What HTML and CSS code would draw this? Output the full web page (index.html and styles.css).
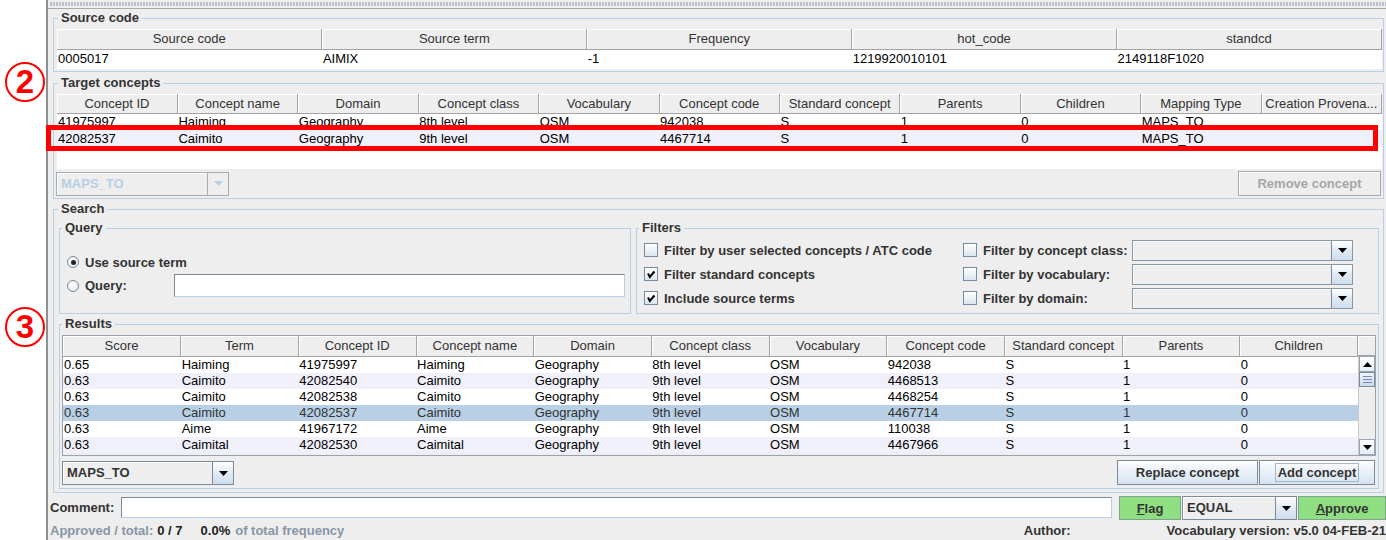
FILE: index.html
```html
<!DOCTYPE html>
<html>
<head>
<meta charset="utf-8">
<title>Mapping</title>
<link rel="stylesheet" href="styles.css">
</head>
<body>
<div class="screen">
  <div class="gutter"></div>
  <div class="vbar"></div>
  <div class="app">
    <div class="hdivider"><div class="dots"></div></div>

    <fieldset class="tb top source">
      <legend>Source code</legend>
      <div class="pane src-pane">
        <table class="grid r20">
          <thead><tr><th>Source code</th><th>Source term</th><th>Frequency</th><th>hot_code</th><th>standcd</th></tr></thead>
          <tbody><tr><td>0005017</td><td>AIMIX</td><td>-1</td><td>1219920010101</td><td>2149118F1020</td></tr></tbody>
        </table>
      </div>
    </fieldset>

    <fieldset class="tb top target">
      <legend>Target concepts</legend>
      <div class="pane tgt-pane">
        <table class="grid r17">
          <thead><tr><th>Concept ID</th><th>Concept name</th><th>Domain</th><th>Concept class</th><th>Vocabulary</th><th>Concept code</th><th>Standard concept</th><th>Parents</th><th>Children</th><th>Mapping Type</th><th>Creation Provena...</th></tr></thead>
          <tbody>
            <tr><td>41975997</td><td>Haiming</td><td>Geography</td><td>8th level</td><td>OSM</td><td>942038</td><td>S</td><td>1</td><td>0</td><td>MAPS_TO</td><td></td></tr>
            <tr class="alt"><td>42082537</td><td>Caimito</td><td>Geography</td><td>9th level</td><td>OSM</td><td>4467714</td><td>S</td><td>1</td><td>0</td><td>MAPS_TO</td><td></td></tr>
          </tbody>
        </table>
      </div>
      <div class="ctl-row">
        <div class="combo dis w173"><span class="cv">MAPS_TO</span><span class="cb"><svg width="9" height="5" viewBox="0 0 9 5"><path d="M0 0H9L4.5 5Z" fill="#b8cfe5"/></svg></span></div>
        <button class="btn dis-btn remove">Remove concept</button>
      </div>
    </fieldset>

    <fieldset class="tb top search">
      <legend>Search</legend>
      <div class="qf-row">
        <fieldset class="tb sub query">
          <legend>Query</legend>
          <div class="qgrid">
            <label class="opt"><span class="radio on"></span>Use source term</label>
            <span></span>
            <label class="opt"><span class="radio"></span>Query:</label>
            <span class="tf qfield"></span>
          </div>
        </fieldset>
        <fieldset class="tb sub filters">
          <legend>Filters</legend>
          <div class="fgrid">
            <label class="opt"><span class="chk"></span>Filter by user selected concepts / ATC code</label>
            <label class="opt"><span class="chk"></span>Filter by concept class:</label>
            <div class="combo fcombo"><span class="cv"></span><span class="cb"><svg width="9" height="5" viewBox="0 0 9 5"><path d="M0 0H9L4.5 5Z" fill="#000"/></svg></span></div>

            <label class="opt"><span class="chk"><svg width="12" height="12" viewBox="0 0 12 12"><path d="M3 5.5L4.8 9L9.5 3.5" fill="none" stroke="#000" stroke-width="2"/></svg></span>Filter standard concepts</label>
            <label class="opt"><span class="chk"></span>Filter by vocabulary:</label>
            <div class="combo fcombo"><span class="cv"></span><span class="cb"><svg width="9" height="5" viewBox="0 0 9 5"><path d="M0 0H9L4.5 5Z" fill="#000"/></svg></span></div>

            <label class="opt"><span class="chk"><svg width="12" height="12" viewBox="0 0 12 12"><path d="M3 5.5L4.8 9L9.5 3.5" fill="none" stroke="#000" stroke-width="2"/></svg></span>Include source terms</label>
            <label class="opt"><span class="chk"></span>Filter by domain:</label>
            <div class="combo fcombo"><span class="cv"></span><span class="cb"><svg width="9" height="5" viewBox="0 0 9 5"><path d="M0 0H9L4.5 5Z" fill="#000"/></svg></span></div>
          </div>
        </fieldset>
      </div>

      <fieldset class="tb sub results">
        <legend>Results</legend>
        <div class="res-pane">
          <div class="res-view">
            <table class="grid r16">
              <thead><tr><th>Score</th><th>Term</th><th>Concept ID</th><th>Concept name</th><th>Domain</th><th>Concept class</th><th>Vocabulary</th><th>Concept code</th><th>Standard concept</th><th>Parents</th><th>Children</th></tr></thead>
              <tbody>
                <tr><td>0.65</td><td>Haiming</td><td>41975997</td><td>Haiming</td><td>Geography</td><td>8th level</td><td>OSM</td><td>942038</td><td>S</td><td>1</td><td>0</td></tr>
                <tr class="alt"><td>0.63</td><td>Caimito</td><td>42082540</td><td>Caimito</td><td>Geography</td><td>9th level</td><td>OSM</td><td>4468513</td><td>S</td><td>1</td><td>0</td></tr>
                <tr><td>0.63</td><td>Caimito</td><td>42082538</td><td>Caimito</td><td>Geography</td><td>9th level</td><td>OSM</td><td>4468254</td><td>S</td><td>1</td><td>0</td></tr>
                <tr class="sel"><td>0.63</td><td>Caimito</td><td>42082537</td><td>Caimito</td><td>Geography</td><td>9th level</td><td>OSM</td><td>4467714</td><td>S</td><td>1</td><td>0</td></tr>
                <tr><td>0.63</td><td>Aime</td><td>41967172</td><td>Aime</td><td>Geography</td><td>9th level</td><td>OSM</td><td>110038</td><td>S</td><td>1</td><td>0</td></tr>
                <tr class="alt"><td>0.63</td><td>Caimital</td><td>42082530</td><td>Caimital</td><td>Geography</td><td>9th level</td><td>OSM</td><td>4467966</td><td>S</td><td>1</td><td>0</td></tr>
              </tbody>
            </table>
          </div>
          <div class="corner"></div>
          <div class="vsb">
            <div class="sb-btn"><svg width="9" height="5" viewBox="0 0 9 5"><path d="M4.5 0L9 5H0Z" fill="#000"/></svg></div>
            <div class="sb-thumb"></div>
            <div class="sb-track"></div>
            <div class="sb-btn"><svg width="9" height="5" viewBox="0 0 9 5"><path d="M0 0H9L4.5 5Z" fill="#000"/></svg></div>
          </div>
        </div>
        <div class="res-actions">
          <div class="combo w172"><span class="cv">MAPS_TO</span><span class="cb"><svg width="9" height="5" viewBox="0 0 9 5"><path d="M0 0H9L4.5 5Z" fill="#000"/></svg></span></div>
          <div class="btn-group">
            <button class="btn replace">Replace concept</button>
            <button class="btn add"><span class="focus">Add concept</span></button>
          </div>
        </div>
      </fieldset>
    </fieldset>

    <div class="comment-row">
      <span class="lbl">Comment:</span>
      <span class="tf cfield"></span>
      <button class="btn green flag"><u>F</u>lag</button>
      <div class="combo eq"><span class="cv">EQUAL</span><span class="cb"><svg width="9" height="5" viewBox="0 0 9 5"><path d="M0 0H9L4.5 5Z" fill="#000"/></svg></span></div>
      <button class="btn green approve"><u>A</u>pprove</button>
    </div>

    <div class="status">
      <div class="st-left"><span class="muted">Approved / total:</span><span class="strong n1">0 / 7</span><span class="strong n2">0.0%</span><span class="muted n3">of total frequency</span></div>
      <div class="st-author">Author:</div>
      <div class="st-ver">Vocabulary version: v5.0 04-FEB-21</div>
    </div>
  </div>

  <div class="mark mark2">2</div>
  <div class="mark mark3">3</div>
  <div class="redbox"></div>
</div>
</body>
</html>
```
FILE: styles.css
```css
* { box-sizing: border-box; }
html, body { margin: 0; padding: 0; }
body {
  width: 1386px; height: 540px; overflow: hidden; background: #fff;
  font-family: "Liberation Sans", Arial, sans-serif; font-size: 13px; color: #000;
}
.screen { position: relative; display: flex; width: 1386px; height: 540px; overflow: hidden; }
.gutter { flex: none; width: 46px; background: #fff; }
.vbar { flex: none; width: 2px; background: #8f8f8f; }
.app { flex: 1; min-width: 0; display: flex; flex-direction: column; background: #eeeeee; }

.hdivider { flex: none; height: 9px; padding-top: 2px; border-bottom: 1px solid #a9a9a9; }
.dots {
  height: 4px; margin-left: 2px;
  background-image: radial-gradient(circle at 1px 1px, #b9c0c8 0.8px, transparent 1.1px);
  background-size: 3px 2px;
}

/* titled borders */
.tb { flex: none; min-width: 0; margin: 0; border: 1px solid #b8cfe5; padding: 3px 1px 2px 3px; }
.tb > legend { padding: 0 3px; margin-left: 1px; font-weight: bold; font-size: 13px; line-height: 16px; color: #333; }
.top { margin: 0 2px 0 5px; }
.source { margin-top: 1px; height: 62px; }
.target { margin-top: 3px; height: 124px; }
.search { margin-top: 2px; height: 292px; padding: 3px 4px 3px 5px; }
.search > legend { margin-left: -1px; }
.sub { padding: 0 2px; }
.sub > legend { margin-left: 0; }

/* tables */
.pane { background: #fff; overflow: hidden; }
.src-pane { height: 40px; }
.tgt-pane { height: 75px; }
.grid { width: 100%; border-collapse: collapse; table-layout: fixed; }
.grid th {
  height: 20px; padding: 0 2px; background: #eeeeee; color: #333; font-weight: normal;
  text-align: center; white-space: nowrap; overflow: hidden; text-overflow: ellipsis;
  border-right: 1px solid #a3a3a3; border-bottom: 1px solid #a3a3a3;
  box-shadow: inset 1px 1px 0 #fff;
}
.grid td { padding: 0 1px; white-space: nowrap; overflow: hidden; background: #fff; }
.r20 td { height: 19px; }
.r17 th { height: 19px; }
.r17 td { height: 17px; }
.r16 td { height: 16px; line-height: 16px; }
.grid tr.alt td { background: #f0f0fa; }
.grid tr.sel td { background: #b8cfe5; color: #333; }

/* target controls */
.ctl-row { display: flex; justify-content: space-between; align-items: center; margin-top: 2px; height: 25px; }
.w173 { width: 173px; margin-left: -1px; }
.remove { width: 143px; margin-right: 1px; }

/* combos */
.combo { display: flex; height: 24px; border: 1px solid #7a8a99; background: #eeeeee; font-weight: bold; color: #333; }
.combo .cv { flex: 1; min-width: 0; padding-left: 4px; line-height: 22px; white-space: nowrap; overflow: hidden; box-shadow: inset 1px 1px 0 #fff; }
.combo .cb {
  flex: none; width: 21px; border-left: 1px solid #7a8a99;
  background: linear-gradient(#ffffff, #e3ecf5 45%, #cddcec);
  display: flex; align-items: center; justify-content: center;
}
.combo.dis { border-color: #a8adb3; color: #b8cfe5; }
.combo.dis .cb { background: #eeeeee; border-left-color: #a8adb3; }
.fcombo { height: 21px; width: 221px; border-color: #8797a8; }
.fcombo .cv { line-height: 19px; }
.w172 { width: 172px; margin-top: 1px; }

/* buttons */
.btn {
  height: 25px; padding: 0; border: 1px solid #7a8a99;
  background: linear-gradient(#ffffff 0%, #eef3f9 35%, #d6e3f0 100%);
  font-family: "Liberation Sans", Arial, sans-serif; font-size: 13px; font-weight: bold; color: #333;
  display: flex; align-items: center; justify-content: center;
}
.dis-btn { background: #eeeeee; border: 1px solid #a8a8a8; color: #a6a6a6; box-shadow: inset 1px 1px 0 #fff; }
.green { background: #8fdf82; border-color: #80a090; }
.btn u { text-decoration: underline; }

/* search layout */
.qf-row { display: flex; gap: 5px; height: 94px; }
.query { width: 572px; height: 94px; padding-top: 0; }
.filters { flex: 1; height: 94px; padding-top: 0; }
.qgrid { display: grid; grid-template-columns: 107px 451px; grid-template-rows: 16px 23px; row-gap: 4px; margin: 18px 0 0 5px; align-items: center; }
.fgrid { display: grid; grid-template-columns: 319px 169px 221px; grid-auto-rows: 24px; margin: 2px 0 0 5px; align-items: center; }
.opt { display: flex; align-items: center; gap: 6px; font-weight: bold; color: #333; white-space: nowrap; }
.radio {
  flex: none; width: 12px; height: 12px; border-radius: 50%; border: 1px solid #7a8a99;
  background: radial-gradient(circle at 40% 35%, #ffffff, #dbe6f1);
  display: flex; align-items: center; justify-content: center;
}
.radio.on::after { content: ""; width: 5px; height: 5px; border-radius: 50%; background: #222; }
.chk {
  flex: none; width: 14px; height: 14px; border: 1px solid #7a8a99;
  background: linear-gradient(#ffffff, #dbe6f1);
  display: flex; align-items: center; justify-content: center;
}
.tf { display: block; background: #fff; border: 1px solid #b8cfe5; border-top-color: #7a8a99; border-left-color: #7a8a99; }
.qfield { height: 23px; width: 451px; }

/* results */
.results { margin-top: 2px; height: 173px; padding-top: 0; }
.res-pane {
  margin-top: 3px; height: 121px; border: 1px solid #9aa3ad;
  display: grid; grid-template-columns: 1fr 17px; grid-template-rows: 20px 99px; background: #eeeeee;
}
.res-view { grid-column: 1; grid-row: 1 / 3; overflow: hidden; }
.corner { grid-column: 2; grid-row: 1; background: #eeeeee; border-bottom: 1px solid #a3a3a3; box-shadow: inset 1px 1px 0 #fff; }
.vsb { grid-column: 2; grid-row: 2; display: flex; flex-direction: column; background: #eeeeee; border-left: 1px solid #c9c9c9; }
.sb-btn {
  flex: none; height: 16px; display: flex; align-items: center; justify-content: center;
  background: linear-gradient(#ffffff, #e6edf4); border: 1px solid #9aa5b0;
}
.sb-thumb {
  flex: none; height: 15px; border: 1px solid #7a8a99;
  background:
    repeating-linear-gradient(#7a8aa9 0 1px, transparent 1px 3px) center / 9px 7px no-repeat,
    linear-gradient(#eef4fb, #c9daeb);
}
.sb-track { flex: 1; }
.res-actions { display: flex; justify-content: space-between; align-items: flex-start; margin-top: 4px; height: 25px; }
.btn-group { display: flex; gap: 1px; margin-right: 1px; }
.replace { width: 141px; }
.add { width: 116px; }
.add .focus { border: 1px solid #a3b8cc; padding: 1px 2px; line-height: 15px; }

/* comment row */
.comment-row { flex: none; margin-top: 3px; height: 25px; display: flex; align-items: flex-start; padding-left: 2px; }
.lbl { width: 71px; font-weight: bold; color: #333; line-height: 24px; }
.cfield { width: 991px; height: 21px; margin-top: 1px; }
.flag { width: 62px; height: 24px; margin-left: 7px; }
.eq { width: 115px; margin-left: 1px; background: #eeeeee; }
.approve { width: 88px; height: 24px; margin-left: 1px; }

/* status */
.status { flex: none; margin-top: 1px; height: 18px; display: flex; padding-left: 2px; font-weight: bold; line-height: 18px; white-space: nowrap; }
.st-left { width: 975px; display: flex; }
.muted { color: #8796a6; }
.strong { color: #222; }
.n1 { margin-left: 4px; }
.n2 { margin-left: 18px; }
.n3 { margin-left: 5px; }
.st-author { width: 143px; color: #333; }
.st-ver { color: #333; }

/* annotations */
.mark {
  position: absolute; left: 5px; width: 40px; height: 40px; border: 2px solid #ff0000; border-radius: 50%;
  color: #ff0000; font-family: "Liberation Sans", Arial, sans-serif; font-weight: bold; font-size: 33px;
  line-height: 36px; text-align: center; background: #fff;
}
.mark2 { top: 62px; }
.mark3 { top: 307px; }
.redbox { position: absolute; left: 46px; top: 125px; width: 1332px; height: 26px; border: 5px solid #ff0000; }
```
